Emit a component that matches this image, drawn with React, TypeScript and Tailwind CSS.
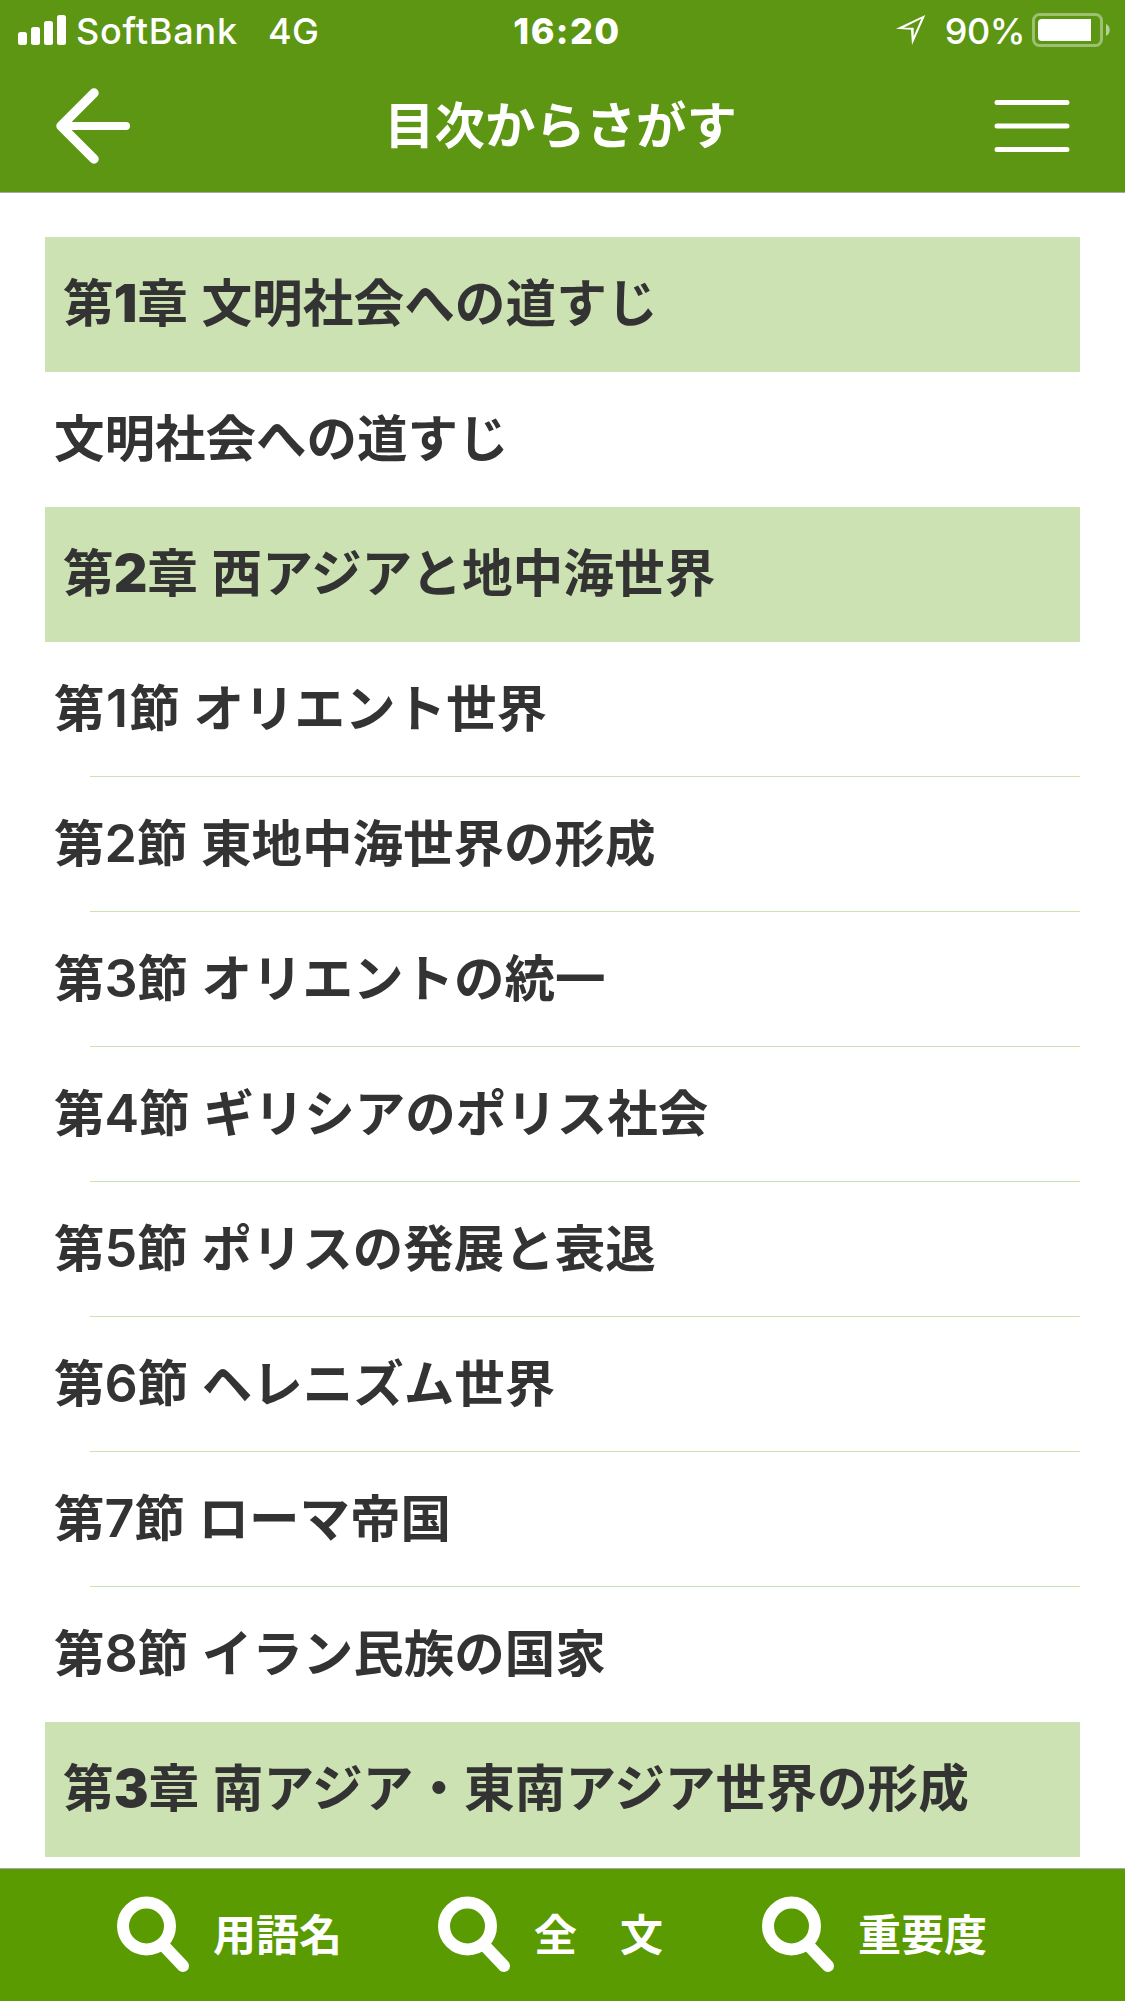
import { clsx } from "clsx";

type Entry = {
  kind: "chapter" | "section";
  text: string;
  number?: string;
  suffix?: string;
};

const entries: Entry[] = [
  { kind: "chapter", number: "1", suffix: "章", text: "文明社会への道すじ" },
  { kind: "section", text: "文明社会への道すじ" },
  { kind: "chapter", number: "2", suffix: "章", text: "西アジアと地中海世界" },
  { kind: "section", number: "1", suffix: "節", text: "オリエント世界" },
  { kind: "section", number: "2", suffix: "節", text: "東地中海世界の形成" },
  { kind: "section", number: "3", suffix: "節", text: "オリエントの統一" },
  { kind: "section", number: "4", suffix: "節", text: "ギリシアのポリス社会" },
  { kind: "section", number: "5", suffix: "節", text: "ポリスの発展と衰退" },
  { kind: "section", number: "6", suffix: "節", text: "ヘレニズム世界" },
  { kind: "section", number: "7", suffix: "節", text: "ローマ帝国" },
  { kind: "section", number: "8", suffix: "節", text: "イラン民族の国家" },
  { kind: "chapter", number: "3", suffix: "章", text: "南アジア・東南アジア世界の形成" },
];

function StatusBar() {
  return (
    <div className="flex h-[60px] items-center justify-between pl-[18px] pr-[15px] text-[36px] leading-[60px] font-medium">
      <div className="flex w-[400px] items-center">
        <svg width="48" height="30" viewBox="0 0 48 30" fill="currentColor">
          <rect x="0" y="17" width="9" height="13" rx="2.5" />
          <rect x="13" y="12" width="9" height="18" rx="2.5" />
          <rect x="26" y="6" width="9" height="24" rx="2.5" />
          <rect x="39" y="0" width="9" height="30" rx="2.5" />
        </svg>
        <span className="ml-[10px] mt-[2px] tracking-[0.8px]">SoftBank</span>
        <span className="ml-[30px] mt-[2px] tracking-[0.5px]">4G</span>
      </div>
      <span className="mt-[2px] ml-[6px] font-extrabold tracking-[1.4px]">16:20</span>
      <div className="flex w-[400px] items-center justify-end">
        <svg width="30" height="30" viewBox="0 0 30 30" fill="currentColor" fillRule="evenodd">
          <path d="M0 13.7 29.3 0 16 30 15 14.7ZM7.7 12.7H17.7V21.3L25.3 3.7Z" />
        </svg>
        <span className="ml-[19px] mt-[2px] tracking-[-0.5px]">90%</span>
        <svg className="ml-[7px]" width="78" height="34" viewBox="0 0 78 34">
          <rect x="1.5" y="1.5" width="68" height="31" rx="6" fill="none" stroke="#fff" strokeOpacity="0.4" strokeWidth="3" />
          <path d="M59 6H10a4 4 0 0 0-4 4v14a4 4 0 0 0 4 4h49z" fill="#fff" />
          <path d="M74 11c5 2 5 10 0 12z" fill="#fff" fillOpacity="0.55" />
        </svg>
      </div>
    </div>
  );
}

function Header() {
  return (
    <header className="h-[193px] shrink-0 border-b border-[#a9a9a9] bg-[#5c9613] text-white">
      <StatusBar />
      <div className="flex h-[132px] items-center justify-between pl-[55px] pr-[55px]">
        <svg width="76" height="78" viewBox="0 0 76 78" fill="none" stroke="currentColor" strokeLinecap="round" strokeLinejoin="round">
          <path d="M39 6 6 39 39 72" strokeWidth="9.5" />
          <path d="M8 39H71" strokeWidth="8" />
        </svg>
        <h1 className="mr-[4px] text-[50.4px] leading-[60px] font-bold">目次からさがす</h1>
        <svg width="76" height="54" viewBox="0 0 76 54" stroke="currentColor" strokeWidth="5" strokeLinecap="round">
          <path d="M3 3.5H73M3 27H73M3 50.5H73" />
        </svg>
      </div>
    </header>
  );
}

function EntryRow({ entry, divided }: { entry: Entry; divided: boolean }) {
  const isChapter = entry.kind === "chapter";
  return (
    <li className={clsx("h-[135px]", isChapter && "bg-[#cce2b2]")}>
      <div
        className={clsx(
          "flex h-[134px] items-center leading-[60px] font-bold whitespace-pre",
          isChapter ? "pl-[18px] text-[50.7px]" : "pl-[9px] text-[50.5px]"
        )}
      >
        {entry.number && (
          <>
            <span>第</span>
            <span
              className={clsx(
                "text-center text-[52px]",
                isChapter ? "font-black" : "min-w-[25px] font-semibold"
              )}
            >
              {entry.number}
            </span>
            <span className="mr-[13.5px]">{entry.suffix}</span>
          </>
        )}
        <span>{entry.text}</span>
      </div>
      {divided && <div className="ml-[45px] h-px bg-[#cce2b2]" />}
    </li>
  );
}

function SearchIcon() {
  return (
    <svg width="74" height="78" viewBox="0 0 74 78" fill="none" stroke="currentColor">
      <circle cx="29.5" cy="30" r="23.5" strokeWidth="12" />
      <path d="M48 51 66 70" strokeWidth="12" strokeLinecap="round" />
    </svg>
  );
}

function Footer() {
  return (
    <footer className="flex h-[133px] shrink-0 border-t border-[#a9a9a9] bg-[#599b00] pl-[117px] pt-[27px] text-[43px] leading-[78px] font-bold text-white">
      <button className="flex w-[321px]">
        <SearchIcon />
        <span className="ml-[22px]">用語名</span>
      </button>
      <button className="flex w-[324px]">
        <SearchIcon />
        <span className="ml-[22px]">全　文</span>
      </button>
      <button className="flex">
        <SearchIcon />
        <span className="ml-[22px]">重要度</span>
      </button>
    </footer>
  );
}

export default function App() {
  return (
    <div
      lang="ja"
      className="flex h-[2001px] w-[1125px] flex-col overflow-hidden bg-white font-[Inter,'Noto_Sans_CJK_JP',sans-serif] text-[#333333]"
    >
      <Header />
      <main className="grow px-[45px] pt-[44px]">
        <ul>
          {entries.map((entry, i) => (
            <EntryRow
              key={i}
              entry={entry}
              divided={entry.kind === "section" && entries[i + 1]?.kind === "section"}
            />
          ))}
        </ul>
      </main>
      <Footer />
    </div>
  );
}
